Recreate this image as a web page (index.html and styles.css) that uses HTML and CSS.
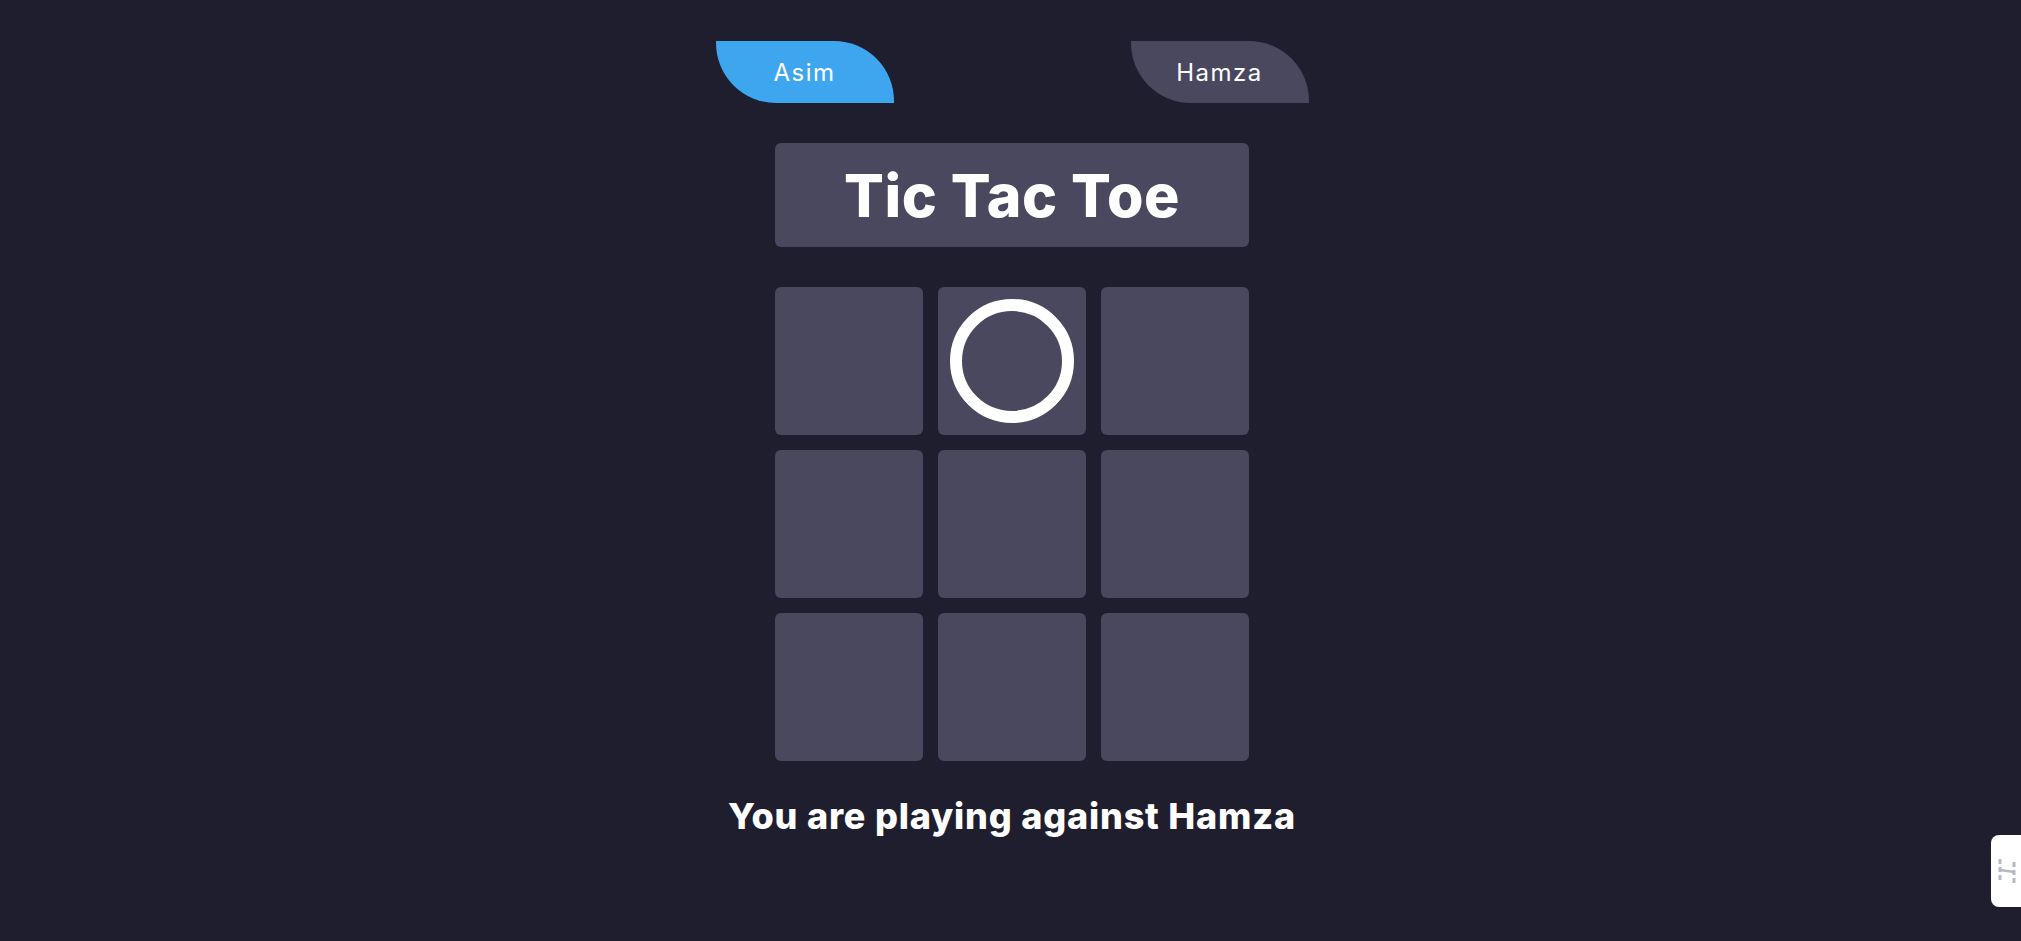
FILE: index.html
```html
<!DOCTYPE html>
<html lang="en">
<head>
<meta charset="utf-8">
<title>Tic Tac Toe</title>
<link rel="stylesheet" href="styles.css">
</head>
<body>
<main class="app">
  <div class="players">
    <div class="tab tab-active">Asim</div>
    <div class="tab">Hamza</div>
  </div>
  <h1 class="title">Tic Tac Toe</h1>
  <div class="board">
    <div class="cell"></div>
    <div class="cell"><span class="mark-o"></span></div>
    <div class="cell"></div>
    <div class="cell"></div>
    <div class="cell"></div>
    <div class="cell"></div>
    <div class="cell"></div>
    <div class="cell"></div>
    <div class="cell"></div>
  </div>
  <p class="status">You are playing against Hamza</p>
</main>
<div class="side-widget">
  <svg width="20" height="26" viewBox="0 0 20 26" fill="none" stroke="#b3bac6" stroke-width="3">
    <path d="M3 1v5M3 9v5M3 17v5" />
    <path d="M17 4v5M17 12v5M17 20v5" />
    <path d="M3 12 L17 14" stroke-width="2.5"/>
  </svg>
</div>
</body>
</html>
```

FILE: styles.css
```css
html, body {
  margin: 0;
  padding: 0;
}

body {
  background: #1f1e2e;
  font-family: Inter, "Noto Sans", sans-serif;
  color: #ffffff;
  min-height: 941px;
}

.app {
  display: flex;
  flex-direction: column;
  align-items: center;
  padding-top: 41px;
  padding-left: 3px;
}

.players {
  width: 593px;
  display: flex;
  justify-content: space-between;
}

.tab {
  width: 178px;
  height: 62px;
  background: #4a485e;
  border-radius: 0 60px 0 60px;
  display: flex;
  align-items: center;
  justify-content: center;
  font-size: 24px;
  font-weight: 400;
  letter-spacing: 1.5px;
  color: #ffffff;
}

.tab-active {
  background: #3ea6ee;
}

.title {
  margin: 40px 0 0;
  width: 474px;
  height: 104px;
  background: #4a485e;
  border-radius: 6px;
  display: flex;
  align-items: center;
  justify-content: center;
  font-size: 59px;
  font-weight: 800;
  letter-spacing: 0.5px;
}

.board {
  margin-top: 40px;
  display: grid;
  grid-template-columns: repeat(3, 148px);
  grid-auto-rows: 148px;
  gap: 15px;
}

.cell {
  background: #4a485e;
  border-radius: 6px;
  display: flex;
  align-items: center;
  justify-content: center;
}

.mark-o {
  width: 124px;
  height: 124px;
  box-sizing: border-box;
  border: 12px solid #ffffff;
  border-radius: 50%;
}

.status {
  margin: 33px 0 0;
  font-size: 36px;
  font-weight: 800;
  letter-spacing: 0.8px;
}

.side-widget {
  position: fixed;
  right: 0;
  top: 835px;
  width: 30px;
  height: 72px;
  background: #ffffff;
  border-radius: 8px 0 0 8px;
  display: flex;
  align-items: center;
  justify-content: flex-start;
  padding-left: 6px;
  box-sizing: border-box;
}
```
